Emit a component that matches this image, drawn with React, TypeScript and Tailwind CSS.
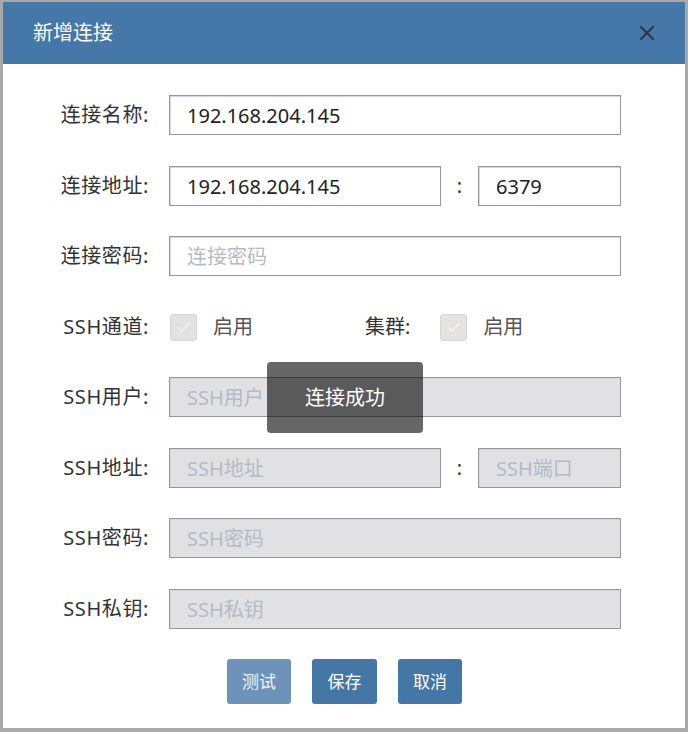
import { X, Check } from "lucide-react";

/**
 * New connection dialog (新增连接)
 * Connection form with SSH tunnel section and a "连接成功" toast overlay
 */

const font = "font-['Noto_Sans','Noto_Sans_CJK_SC',sans-serif]";

interface FieldProps {
  value?: string;
  placeholder?: string;
  disabled?: boolean;
  className?: string;
}

function Field({ value, placeholder, disabled, className = "" }: FieldProps) {
  return (
    <input
      readOnly
      disabled={disabled}
      value={value ?? ""}
      placeholder={placeholder}
      className={`h-[40px] border border-[#979797] px-[17px] pt-[1px] text-[20px] text-[#222] outline-none shadow-[inset_1px_1px_0_#d6d6d6] placeholder:text-[#b3bbc7] ${
        disabled ? "bg-[#e1e1e3]" : "bg-white"
      } ${font} ${className}`}
    />
  );
}

function Label({ children }: { children: React.ReactNode }) {
  return <div className="w-[146px] shrink-0 text-right text-[20px] tracking-[0.6px] text-[#333]">{children}</div>;
}

function Box({ tint = "bg-[#e2e2e2]" }: { tint?: string }) {
  return (
    <span className={`flex h-[27px] w-[27px] items-center justify-center rounded-[3px] border border-[#d6d6d6] ${tint}`}>
      <Check className="h-[17px] w-[17px] text-[#f4f4f4]" strokeWidth={1.6} />
    </span>
  );
}

export default function App() {
  return (
    <div className={`h-[732px] w-[688px] bg-[#a9a9a9] pl-[3px] pr-[3px] pt-[2px] ${font}`}>
      <div className="relative h-[726px] bg-white">
        {/* header */}
        <div className="flex h-[62px] items-center justify-between bg-[#4577a8] pl-[30px] pr-[26px]">
          <span className="text-[20px] text-white">新增连接</span>
          <X className="h-[24px] w-[24px] text-[#2c3646]" strokeWidth={2.2} />
        </div>

        <div className="flex flex-col pt-[31px]">
          <div className="flex h-[40px] items-center gap-[20px]">
            <Label>连接名称:</Label>
            <Field value="192.168.204.145" className="w-[452px]" />
          </div>

          <div className="mt-[31px] flex h-[40px] items-center gap-[20px]">
            <Label>连接地址:</Label>
            <div className="flex items-center">
              <Field value="192.168.204.145" className="w-[272px]" />
              <span className="w-[37px] text-center text-[20px] text-[#333]">:</span>
              <Field value="6379" className="w-[143px]" />
            </div>
          </div>

          <div className="mt-[30px] flex h-[40px] items-center gap-[20px]">
            <Label>连接密码:</Label>
            <Field placeholder="连接密码" className="w-[452px]" />
          </div>

          <div className="mt-[31px] flex h-[40px] items-center gap-[20px]">
            <Label>SSH通道:</Label>
            <div className="flex items-center text-[20px]">
              <div className="flex w-[196px] items-center pl-[1px]">
                <Box />
                <span className="ml-[16px] text-[#555]">启用</span>
              </div>
              <span className="text-[#333]">集群:</span>
              <span className="ml-[30px]">
                <Box tint="bg-[#e6e2df]" />
              </span>
              <span className="ml-[16px] text-[#555]">启用</span>
            </div>
          </div>

          <div className="mt-[30px] flex h-[40px] items-center gap-[20px]">
            <Label>SSH用户:</Label>
            <Field disabled placeholder="SSH用户" className="w-[452px]" />
          </div>

          <div className="mt-[31px] flex h-[40px] items-center gap-[20px]">
            <Label>SSH地址:</Label>
            <div className="flex items-center">
              <Field disabled placeholder="SSH地址" className="w-[272px]" />
              <span className="w-[37px] text-center text-[20px] text-[#333]">:</span>
              <Field disabled placeholder="SSH端口" className="w-[143px]" />
            </div>
          </div>

          <div className="mt-[30px] flex h-[40px] items-center gap-[20px]">
            <Label>SSH密码:</Label>
            <Field disabled placeholder="SSH密码" className="w-[452px]" />
          </div>

          <div className="mt-[31px] flex h-[40px] items-center gap-[20px]">
            <Label>SSH私钥:</Label>
            <Field disabled placeholder="SSH私钥" className="w-[452px]" />
          </div>

          <div className="mt-[30px] flex justify-center gap-[21px] pl-[1px]">
            <button className="h-[45px] w-[64px] rounded-[3px] bg-[#6d93bb] text-[17px] text-[#eef3f8]">测试</button>
            <button className="h-[45px] w-[65px] rounded-[3px] bg-[#4476a6] text-[17px] text-white">保存</button>
            <button className="h-[45px] w-[64px] rounded-[3px] bg-[#4476a6] text-[17px] text-white">取消</button>
          </div>
        </div>

        {/* toast */}
        <div className="absolute left-[264px] top-[360px] flex h-[71px] w-[156px] items-center justify-center rounded-[4px] bg-black/60 text-[20px] text-white">
          连接成功
        </div>
      </div>
    </div>
  );
}
